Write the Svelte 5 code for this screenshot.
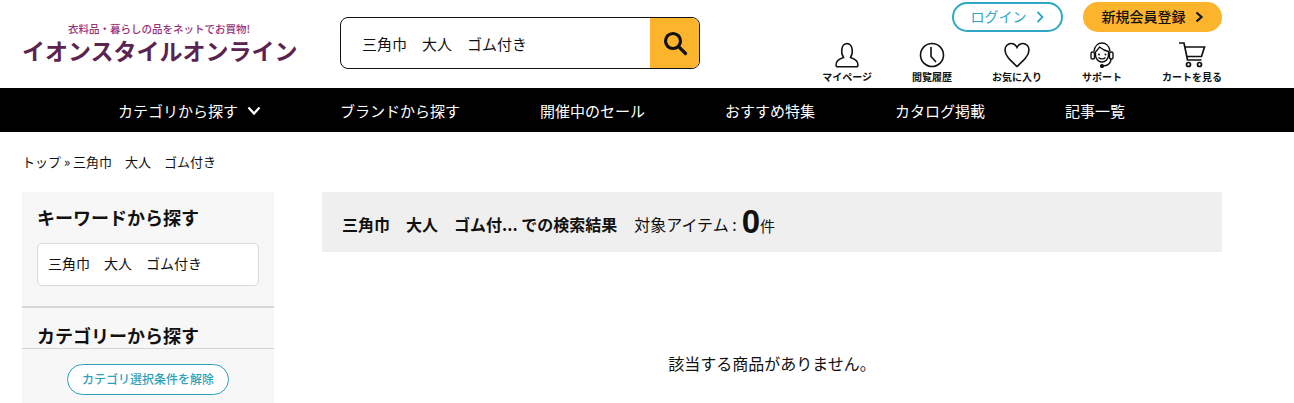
<script>
  const navItems = ['ブランドから探す', '開催中のセール', 'おすすめ特集', 'カタログ掲載', '記事一覧'];
  const query = '三角巾　大人　ゴム付き';
</script>

<div class="page">
  <header class="header">
    <div class="logo">
      <span class="tagline">衣料品・暮らしの品をネットでお買物!</span>
      <span class="brand">イオンスタイルオンライン</span>
    </div>
    <div class="search">
      <span class="search-text">{query}</span>
      <span class="search-btn">
        <svg width="26" height="26" viewBox="0 0 26 26" fill="none" stroke="#111" stroke-width="3.2">
          <circle cx="11" cy="11" r="7.5" />
          <path d="M16.5 16.5 23.5 23.5" stroke-linecap="round" />
        </svg>
      </span>
    </div>
    <div class="account">
      <div class="cta-row">
        <span class="btn-login">ログイン
          <svg width="9" height="12" viewBox="0 0 9 12" fill="none" stroke="#2ea7c4" stroke-width="1.8"><path d="M1.5 1 6.5 6 1.5 11" /></svg>
        </span>
        <span class="btn-register">新規会員登録
          <svg width="9" height="12" viewBox="0 0 9 12" fill="none" stroke="#111" stroke-width="2.2"><path d="M1.5 1.5 6.5 6 1.5 10.5" /></svg>
        </span>
      </div>
      <div class="icons">
        <div class="icon-item">
          <svg width="26" height="26" viewBox="0 0 26 26" fill="none" stroke="#111" stroke-width="1.5">
            <path d="M9.5 15.500C6.500 11 7 2 13 1.500c6 .5 6.500 9.500 3.500 14 3.500 1 7.500 3.500 7.500 7.500 0 1.200-.7 1.800-1.800 1.800H3.800C2.700 24.800 2 24.200 2 23c0-4 4-6.500 7.500-7.500Z" />
          </svg>
          <span>マイページ</span>
        </div>
        <div class="icon-item">
          <svg width="26" height="26" viewBox="0 0 26 26" fill="none" stroke="#111" stroke-width="1.6">
            <circle cx="13" cy="13" r="11.500" />
            <path d="M12 5v9.500l5 5.500" />
          </svg>
          <span>閲覧履歴</span>
        </div>
        <div class="icon-item">
          <svg width="26" height="26" viewBox="0 0 26 26" fill="none" stroke="#111" stroke-width="1.6">
            <path d="M13 24.500C7 19 1 14 1 8 1 4 4 1.500 7 1.500c2.800 0 4.800 1.500 6 4 1.200-2.500 3.200-4 6-4 3 0 6 2.500 6 6.500 0 6-6 11-12 16.500Z" />
          </svg>
          <span>お気に入り</span>
        </div>
        <div class="icon-item">
          <svg width="26" height="26" viewBox="0 0 26 26" fill="none" stroke="#111" stroke-width="1.400">
            <path d="M5 9.500C5.500 4 9 1 13 1s7.500 3 8 8.500" />
            <path d="M6.500 10c1.500-2 3-3 4-5 3 2.500 6 4 9 4.500V13c0 4-3 7-6.500 7s-6.500-3-6.500-7Z" />
            <rect x="2" y="10" width="3.500" height="7" rx="1.500" />
            <rect x="20.500" y="10" width="3.500" height="7" rx="1.500" />
            <path d="M22 17c0 4-3 6.500-7.500 7" />
            <circle cx="13" cy="24" r="1.400" fill="#111" />
            <circle cx="10" cy="12.500" r="1" fill="#111" stroke="none" />
            <circle cx="16.500" cy="12.500" r="1" fill="#111" stroke="none" />
            <path d="M9.500 15.500c2 1.800 5 1.800 7 0" />
          </svg>
          <span>サポート</span>
        </div>
        <div class="icon-item">
          <svg width="28" height="26" viewBox="0 0 28 26" fill="none" stroke="#111" stroke-width="1.700">
            <path d="M1 1h5l3.500 17h14" />
            <path d="M7 5h19.500l-3 9.500H9" />
            <circle cx="10.500" cy="22.500" r="2" />
            <circle cx="21.500" cy="22.500" r="2" />
          </svg>
          <span>カートを見る</span>
        </div>
      </div>
    </div>
  </header>

  <nav class="nav">
    <span class="nav-item nav-first">カテゴリから探す
      <svg width="14" height="10" viewBox="0 0 14 10" fill="none" stroke="#fff" stroke-width="2.2"><path d="M1.500 1.500 7 7.500 12.500 1.500" /></svg>
    </span>
    {#each navItems as item}
      <span class="nav-item">{item}</span>
    {/each}
  </nav>

  <div class="crumb">トップ » {query}</div>

  <div class="content">
    <aside class="side">
      <section class="kw">
        <h2>キーワードから探す</h2>
        <div class="kw-box">{query}</div>
      </section>
      <h2 class="cat-title">カテゴリーから探す</h2>
      <div class="cat-body">
        <span class="clear">カテゴリ選択条件を解除</span>
      </div>
    </aside>
    <main class="main">
      <div class="result">
        <strong>三角巾　大人　ゴム付... での検索結果</strong>
        <span class="target">対象アイテム :</span><b class="num">0</b><span class="unit">件</span>
      </div>
      <p class="empty">該当する商品がありません。</p>
    </main>
  </div>
</div>

<style>
  :global(body) {
    margin: 0;
    background: #fff;
    overflow: hidden;
  }
  .page {
    height: 403px;
    overflow: hidden;
    color: #111;
    font-family: "Noto Sans CJK JP", "Noto Sans", sans-serif;
  }
  .header {
    display: flex;
    height: 88px;
    padding: 0 72px 0 22px;
    box-sizing: border-box;
  }
  .logo {
    width: 318px;
    display: flex;
    flex-direction: column;
    padding-top: 22px;
    flex: none;
  }
  .tagline {
    font-size: 10.5px;
    line-height: 14px;
    color: #97337a;
    margin-left: 46px;
    white-space: nowrap;
    font-weight: 500;
  }
  .brand {
    font-size: 23px;
    line-height: 28px;
    font-weight: 700;
    color: #5b2350;
    white-space: nowrap;
  }
  .search {
    width: 360px;
    height: 52px;
    margin-top: 17px;
    box-sizing: border-box;
    border: 1px solid #111;
    border-radius: 8px;
    overflow: hidden;
    display: flex;
    align-items: center;
    justify-content: space-between;
    flex: none;
  }
  .search-text {
    font-size: 15px;
    padding-left: 21px;
  }
  .search-btn {
    width: 49px;
    height: 100%;
    background: #fdb42d;
    display: flex;
    align-items: center;
    justify-content: center;
  }
  .account {
    margin-left: auto;
    width: 420px;
    display: flex;
    flex-direction: column;
    align-items: flex-end;
    flex: none;
  }
  .cta-row {
    display: flex;
    gap: 20px;
    margin-top: 2px;
  }
  .btn-login, .btn-register {
    height: 30px;
    border-radius: 15px;
    box-sizing: border-box;
    display: flex;
    align-items: center;
    justify-content: center;
    gap: 9px;
    font-size: 14px;
    padding-bottom: 3px;
  }
  .btn-login svg, .btn-register svg {
    margin-top: 3px;
  }
  .btn-login {
    width: 111px;
    border: 2px solid #2ea7c4;
    color: #2ea7c4;
  }
  .btn-register {
    width: 139px;
    background: #fdb42d;
    font-weight: 500;
  }
  .icons {
    display: flex;
    gap: 40px;
    margin-top: 10px;
  }
  .icon-item {
    display: flex;
    flex-direction: column;
    align-items: center;
  }
  .icon-item span {
    font-size: 10px;
    line-height: 12px;
    font-weight: 700;
    margin-top: 3px;
    white-space: nowrap;
  }
  .nav {
    height: 44px;
    background: #000;
    display: flex;
    align-items: center;
    gap: 80px;
    padding-left: 118px;
  }
  .nav-item {
    color: #fff;
    font-size: 15px;
    white-space: nowrap;
  }
  .nav-first {
    width: 142px;
    display: flex;
    align-items: center;
    gap: 9px;
  }
  .nav-first svg {
    flex: none;
    margin-top: 2px;
  }
  .crumb {
    font-size: 13px;
    line-height: 20px;
    padding: 20px 0 0 22px;
  }
  .content {
    display: flex;
    gap: 48px;
    padding: 20px 0 0 22px;
  }
  .side {
    width: 252px;
    background: #f7f7f7;
    flex: none;
    height: 300px;
  }
  h2 {
    font-size: 18px;
    line-height: 24px;
    font-weight: 700;
    margin: 0;
  }
  .kw {
    padding: 13px 15px 0;
    border-bottom: 2px solid #d9d9d9;
    height: 116px;
    box-sizing: border-box;
  }
  .kw-box {
    margin-top: 14px;
    height: 43px;
    box-sizing: border-box;
    background: #fff;
    border: 1px solid #d9d9d9;
    border-radius: 5px;
    font-size: 14px;
    line-height: 39px;
    padding-left: 10px;
  }
  .cat-title {
    padding: 15px 15px 0;
    height: 25px;
    border-bottom: 1px solid #d4d4d4;
    box-sizing: content-box;
  }
  .cat-body {
    display: flex;
    justify-content: center;
    padding-top: 15px;
  }
  .clear {
    width: 162px;
    height: 31px;
    box-sizing: border-box;
    border: 1px solid #2ea1ba;
    border-radius: 16px;
    background: #fff;
    color: #2ea1ba;
    font-size: 12px;
    line-height: 28px;
    text-align: center;
    font-weight: 500;
  }
  .main {
    width: 900px;
    flex: none;
  }
  .result {
    height: 60px;
    background: #efefef;
    display: flex;
    align-items: center;
    padding: 0 0 0 20px;
    box-sizing: border-box;
    font-size: 16px;
  }
  .result strong {
    font-weight: 700;
    margin-right: 17px;
    margin-top: 4px;
  }
  .target {
    margin-top: 4px;
  }
  .num {
    font-size: 33px;
    line-height: 36px;
    font-weight: 700;
    font-family: "Liberation Sans", sans-serif;
    margin-left: 5px;
  }
  .unit {
    margin-top: 6px;
    font-size: 15px;
  }
  .empty {
    margin: 100px 0 0;
    text-align: center;
    font-size: 16px;
    line-height: 22px;
  }
</style>
